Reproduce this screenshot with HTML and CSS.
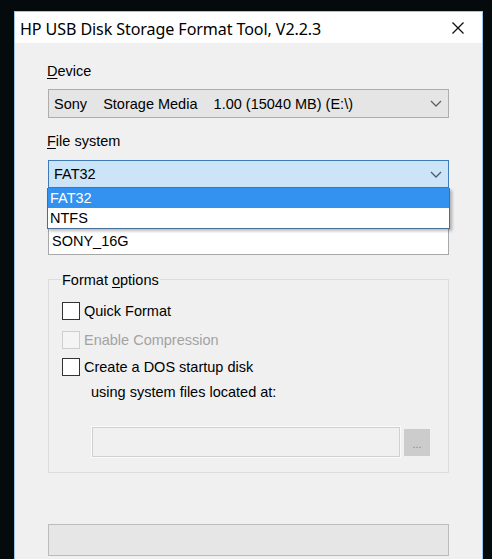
FILE: index.html
```html
<!DOCTYPE html>
<html>
<head>
<meta charset="utf-8">
<link rel="stylesheet" href="styles.css">
</head>
<body>
<div class="window">
  <div class="titlebar">
    <span class="title">HP USB Disk Storage Format Tool, V2.2.3</span>
    <svg class="close" width="14" height="14" viewBox="0 0 14 14"><path d="M1.5 1.5 L12.5 12.5 M12.5 1.5 L1.5 12.5" stroke="#111" stroke-width="1.3" fill="none"/></svg>
  </div>
  <div class="client">
    <div class="label lbl-device"><u>D</u>evice</div>
    <div class="combo combo-device">
      <span class="combo-text">Sony&nbsp;&nbsp;&nbsp;&nbsp;Storage Media&nbsp;&nbsp;&nbsp;&nbsp;1.00 (15040 MB) (E:\)</span>
      <svg class="chev" width="12" height="7" viewBox="0 0 12 7"><path d="M1 1 L6 6 L11 1" stroke="#606060" stroke-width="1.3" fill="none"/></svg>
    </div>
    <div class="label lbl-fs"><u>F</u>ile system</div>
    <div class="fs-wrap">
      <div class="combo combo-fs">
        <span class="combo-text">FAT32</span>
        <svg class="chev" width="12" height="7" viewBox="0 0 12 7"><path d="M1 1 L6 6 L11 1" stroke="#505a66" stroke-width="1.3" fill="none"/></svg>
      </div>
      <div class="droplist">
        <div class="item selected">FAT32</div>
        <div class="item">NTFS</div>
      </div>
      <div class="textbox">SONY_16G</div>
    </div>
    <div class="group">
      <div class="legend">Format <u>o</u>ptions</div>
      <div class="check-row">
        <span class="box"></span><span>Quick Format</span>
      </div>
      <div class="check-row disabled">
        <span class="box"></span><span>Enable Compression</span>
      </div>
      <div class="check-row third">
        <span class="box"></span><span>Create a DOS startup disk</span>
      </div>
      <div class="subtext">using system files located at:</div>
      <div class="path-row">
        <div class="path-box"></div>
        <div class="browse">...</div>
      </div>
    </div>
    <div class="progress"></div>
  </div>
</div>
</body>
</html>
```

FILE: styles.css
```css
html, body {
  margin: 0;
  padding: 0;
  background: #050a0c;
  width: 492px;
  height: 559px;
  overflow: hidden;
}
.window {
  margin: 11px 0 0 14px;
  width: 467px;
  height: 560px;
  border: 1px solid #9cc6e8;
  border-bottom: none;
  background: #f0f0f0;
  font-family: "Liberation Sans", Arial, sans-serif;
  font-size: 14.5px;
  color: #000;
}
.titlebar {
  height: 31px;
  background: #ffffff;
  display: flex;
  align-items: center;
  justify-content: space-between;
  padding: 0 17px 0 5px;
}
.title {
  font-family: "Noto Sans", "Open Sans", sans-serif;
  font-size: 16.1px;
  color: #000;
  padding-top: 2px;
  letter-spacing: -0.1px;
}
.close {
  display: block;
}
.client {
  padding: 19px 33px 0 33px;
}
.label {
  height: 18px;
  line-height: 18px;
  margin-left: -1px;
}
.label u { text-decoration: underline; text-underline-offset: 2px; }
.lbl-device { margin-bottom: 9px; }
.combo {
  height: 27px;
  border: 1px solid #adadad;
  background: #e5e5e5;
  display: flex;
  align-items: center;
  justify-content: space-between;
  padding: 0 6px 0 5px;
}
.combo-text { white-space: nowrap; }
.combo-device { margin-bottom: 14px; }
.lbl-fs { margin-bottom: 10px; }
.combo-fs {
  border-color: #3e7ab8;
  background: #cce4f7;
  height: 26px;
}
.fs-wrap {
  position: relative;
}
.droplist {
  position: absolute;
  left: -1px;
  right: -1px;
  top: 28px;
  background: #ffffff;
  border: 1px solid #4a6f96;
  border-top: none;
  box-shadow: 2px 2px 3px rgba(0,0,0,0.28);
  z-index: 2;
}
.item {
  height: 20px;
  line-height: 20px;
  padding-left: 2px;
}
.item.selected {
  background: #3392f0;
  color: #ffffff;
}
.textbox {
  margin-top: 38px;
  height: 27px;
  line-height: 29px;
  border: 1px solid #a8a8a8;
  background: #ffffff;
  padding-left: 3px;
}
.group {
  margin-top: 24px;
  border: 1px solid #dcdcdc;
  height: 192px;
  position: relative;
  padding: 0 0 0 13px;
}
.legend {
  background: #f0f0f0;
  display: inline-block;
  padding: 0 1px;
  margin: -9px 0 0 -1px;
  height: 18px;
  line-height: 18px;
  vertical-align: top;
}
.legend u { text-decoration: underline; text-underline-offset: 2px; }
.check-row {
  display: flex;
  align-items: center;
  height: 18px;
  gap: 4px;
  margin-top: 6px;
}
.check-row + .check-row { margin-top: 11px; }
.check-row.third { margin-top: 9px; }
.check-row .box {
  width: 16px;
  height: 16px;
  border: 1px solid #333;
  background: #ffffff;
  box-sizing: content-box;
}
.check-row.disabled { color: #a3a3a3; }
.check-row.disabled .box { border-color: #cfcfcf; background: #f4f4f4; }
.subtext {
  margin: 7px 0 0 29px;
  height: 18px;
  line-height: 18px;
}
.path-row {
  display: flex;
  align-items: center;
  gap: 4px;
  margin: 26px 0 0 30px;
}
.path-box {
  width: 306px;
  height: 28px;
  border: 1px solid #d0d0d0;
  outline: 1px solid #fafafa;
  background: #f0f0f0;
}
.browse {
  width: 26px;
  height: 27px;
  background: #cccccc;
  color: #888;
  font-size: 11px;
  text-align: center;
  line-height: 30px;
}
.progress {
  margin-top: 51px;
  height: 30px;
  border: 1px solid #bcbcbc;
  background: #e6e6e6;
}
```
